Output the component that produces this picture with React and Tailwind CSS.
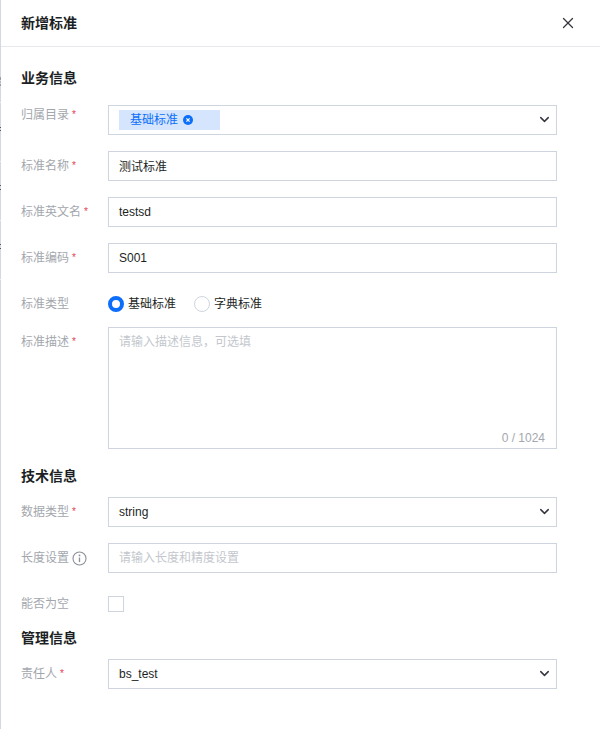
import { ChevronDown, X } from 'lucide-react'

// bits of the page behind the drawer that peek through at its left edge
const EDGE_MARKS = [
  { top: 77, height: 3, color: '#9a9da3' },
  { top: 81, height: 2, color: '#b5b8bd' },
  { top: 84, height: 2, color: '#9a9da3' },
  { top: 102, height: 1, color: '#eceef2' },
  { top: 127, height: 1, color: '#55585e' },
  { top: 130, height: 1, color: '#55585e' },
  { top: 161, height: 1, color: '#eceef2' },
  { top: 185, height: 1, color: '#55585e' },
  { top: 189, height: 1, color: '#55585e' },
  { top: 220, height: 1, color: '#eceef2' },
  { top: 244, height: 1, color: '#55585e' },
  { top: 248, height: 1, color: '#55585e' },
  { top: 279, height: 1, color: '#eceef2' },
]

const Row = ({ label, required, labelTop = 'pt-[5px]', labelIcon, className = '', children }) => (
  <div className={`flex items-start ${className}`}>
    <div className={labelTop}>
      <div className="w-[87px] shrink-0 flex items-center h-[20px] text-[12px] leading-[20px] text-[#a3a7ad]">
        {label}
        {required && <span className="ml-[3px] text-[10px] leading-none text-[#e5404f]">*</span>}
        {labelIcon}
      </div>
    </div>
    {children}
  </div>
)

const Box = ({ children, className = 'text-[#1c1f24] pl-[10px]' }) => (
  <div className={`w-[449px] h-[30px] border border-[#cfd5de] flex items-center justify-between pr-[4px] text-[12px] ${className}`}>
    {children}
  </div>
)

const Chevron = () => <ChevronDown size={15} strokeWidth={2.3} className="text-[#33373d] -mt-[2px]" />

const Heading = ({ children, className = '' }) => (
  <h3 className={`text-[14px] leading-[20px] font-bold text-[#1c1f24] ${className}`}>{children}</h3>
)

export default function App() {
  return (
    <div
      className="relative w-[600px] h-[729px] bg-white border-l border-[#d5d8e0] overflow-hidden"
      style={{ fontFamily: '"Liberation Sans", "Noto Sans CJK SC", sans-serif' }}
    >
      {EDGE_MARKS.map(m => (
        <span
          key={m.top}
          className="fixed left-0 w-[1px]"
          style={{ top: m.top, height: m.height, background: m.color }}
        />
      ))}

      <div className="h-[47px] border-b border-[#e6e8ee] flex items-center justify-between pl-[20px] pr-[23px]">
        <span className="text-[14px] font-bold text-[#1c1f24]">新增标准</span>
        <X size={18} strokeWidth={1.7} className="text-[#33373d]" />
      </div>

      <div className="pl-[20px]">
        <Heading className="mt-[21px]">业务信息</Heading>

        <Row label="归属目录" required labelTop="pt-0" className="mt-[17px]">
          <Box>
            <div className="w-[101px] h-[20px] bg-[#d4e5fd] flex items-center pl-[11px] text-[#0d6efa]">
              基础标准
              <svg width="10" height="10" viewBox="0 0 10 10" className="ml-[5px]">
                <circle cx="5" cy="5" r="5" fill="#0d6efa" />
                <path d="M3.4 3.4 6.6 6.6M6.6 3.4 3.4 6.6" stroke="#fff" strokeWidth="1.2" />
              </svg>
            </div>
            <Chevron />
          </Box>
        </Row>

        <Row label="标准名称" required className="mt-[16px]"><Box><span className="mt-[1px]">测试标准</span></Box></Row>
        <Row label="标准英文名" required className="mt-[16px]"><Box>testsd</Box></Row>
        <Row label="标准编码" required className="mt-[16px]"><Box>S001</Box></Row>

        <Row label="标准类型" className="mt-[16px]">
          <div className="h-[30px] flex items-center text-[12px] text-[#1c1f24]">
            <span className="w-[16px] h-[16px] rounded-full border-[4px] border-[#0d6efa] bg-white" />
            <span className="ml-[4px]">基础标准</span>
            <span className="ml-[18px] w-[16px] h-[16px] rounded-full border border-[#cfd5de]" />
            <span className="ml-[4px]">字典标准</span>
          </div>
        </Row>

        <Row label="标准描述" required className="mt-[8px]">
          <div className="relative w-[449px] h-[122px] border border-[#cfd5de] pl-[10px] pt-[4px] text-[12px] leading-[20px] text-[#c3c7cd]">
            请输入描述信息，可选填
            <span className="absolute right-[11px] bottom-[0px] text-[#a3a7ad]">0 / 1024</span>
          </div>
        </Row>

        <Heading className="mt-[17px]">技术信息</Heading>

        <Row label="数据类型" required className="mt-[11px]">
          <Box>string<Chevron /></Box>
        </Row>

        <Row
          label="长度设置"
          className="mt-[16px]"
          labelIcon={
            <svg width="15" height="15" viewBox="0 0 15 15" className="ml-[3px]">
              <circle cx="7.5" cy="7.5" r="6.5" fill="none" stroke="#8b8f96" strokeWidth="1.1" />
              <path d="M7.5 6.5v4.6" stroke="#8b8f96" strokeWidth="1.3" />
              <circle cx="7.5" cy="4.4" r="0.9" fill="#8b8f96" />
            </svg>
          }
        >
          <Box className="text-[#c3c7cd] pl-[10px]">请输入长度和精度设置</Box>
        </Row>

        <div className="flex items-center mt-[22px] h-[18px]">
          <div className="w-[87px] text-[12px] text-[#a3a7ad]">能否为空</div>
          <span className="w-[16px] h-[16px] border border-[#cfd5de]" />
        </div>

        <Heading className="mt-[15px]">管理信息</Heading>

        <Row label="责任人" required className="mt-[11px]">
          <Box>bs_test<Chevron /></Box>
        </Row>
      </div>
    </div>
  )
}
